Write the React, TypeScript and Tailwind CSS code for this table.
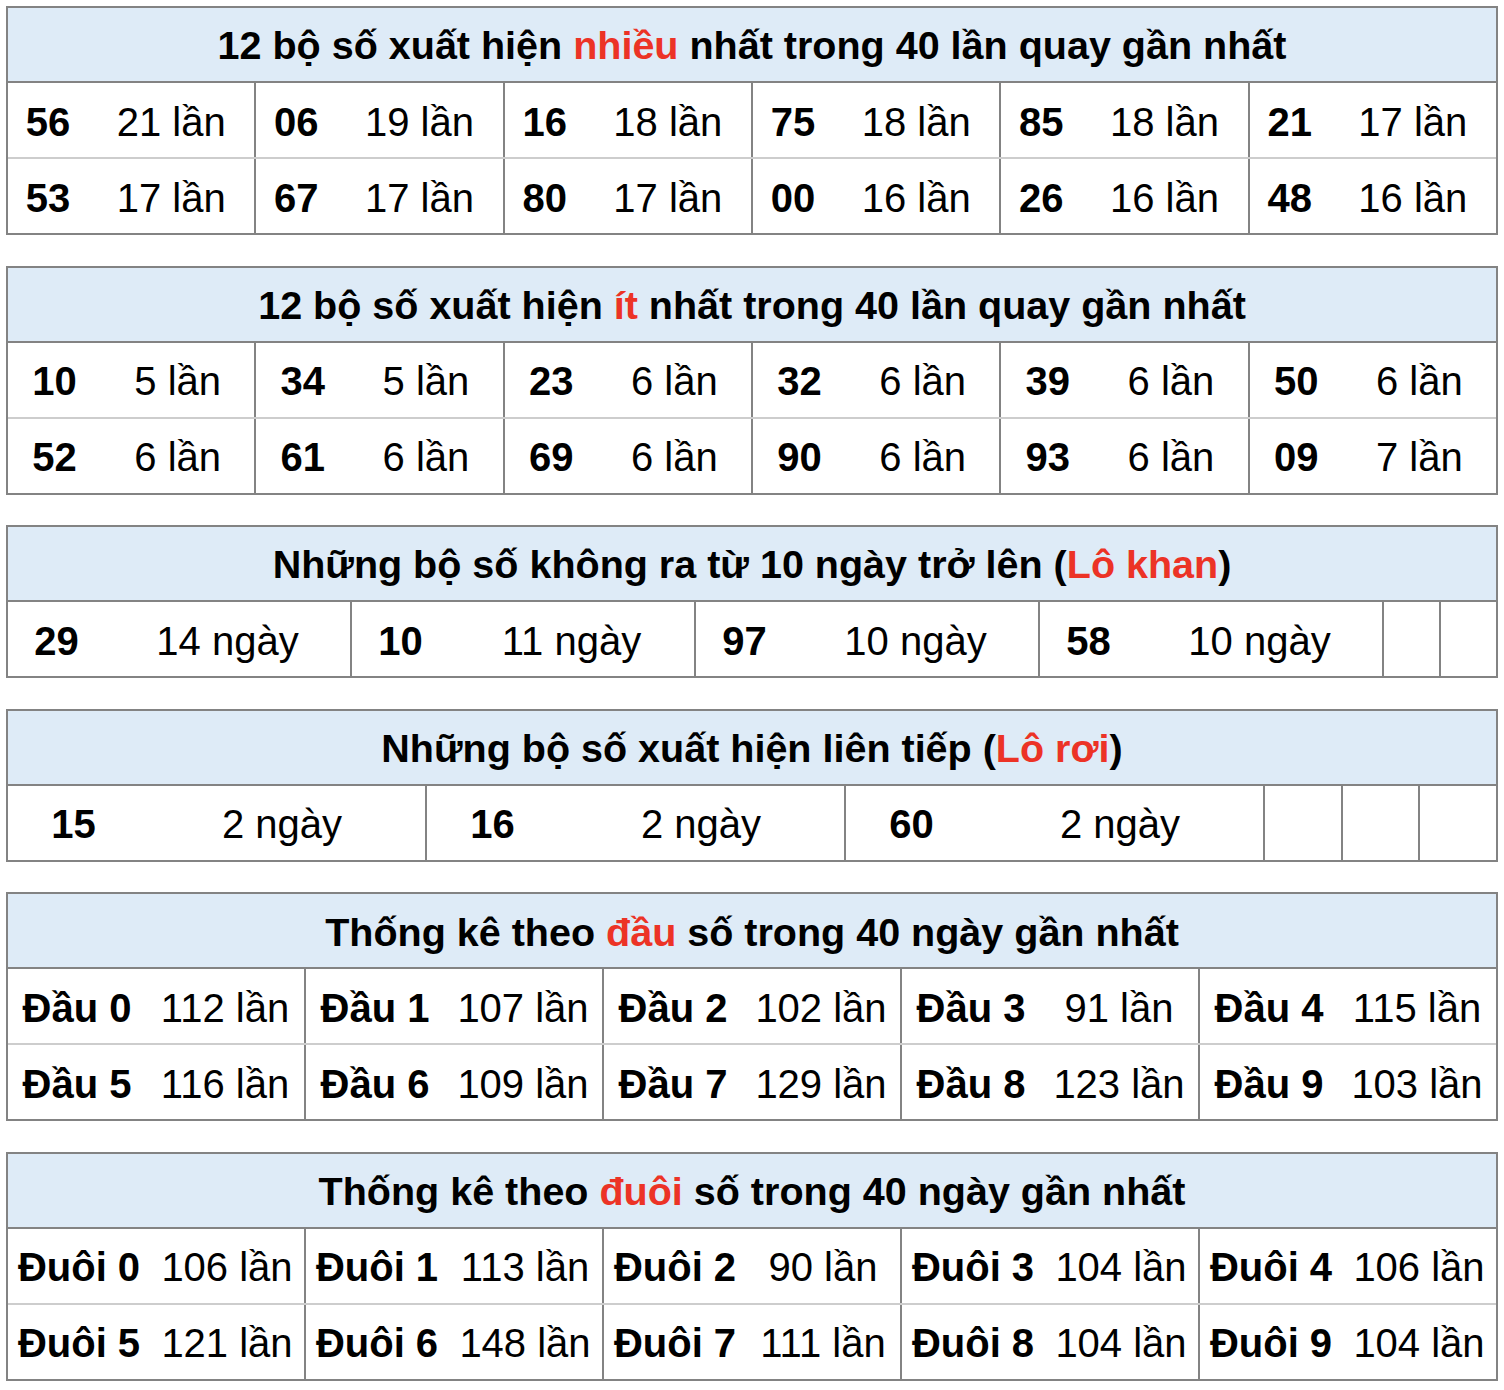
type Pair = [string, string];

const NHIEU: Pair[][] = [
  [['56', '21 lần'], ['06', '19 lần'], ['16', '18 lần'], ['75', '18 lần'], ['85', '18 lần'], ['21', '17 lần']],
  [['53', '17 lần'], ['67', '17 lần'], ['80', '17 lần'], ['00', '16 lần'], ['26', '16 lần'], ['48', '16 lần']],
];

const IT: Pair[][] = [
  [['10', '5 lần'], ['34', '5 lần'], ['23', '6 lần'], ['32', '6 lần'], ['39', '6 lần'], ['50', '6 lần']],
  [['52', '6 lần'], ['61', '6 lần'], ['69', '6 lần'], ['90', '6 lần'], ['93', '6 lần'], ['09', '7 lần']],
];

const KHAN: Pair[] = [['29', '14 ngày'], ['10', '11 ngày'], ['97', '10 ngày'], ['58', '10 ngày']];
const ROI: Pair[] = [['15', '2 ngày'], ['16', '2 ngày'], ['60', '2 ngày']];

const DAU: Pair[][] = [
  [['Đầu 0', '112 lần'], ['Đầu 1', '107 lần'], ['Đầu 2', '102 lần'], ['Đầu 3', '91 lần'], ['Đầu 4', '115 lần']],
  [['Đầu 5', '116 lần'], ['Đầu 6', '109 lần'], ['Đầu 7', '129 lần'], ['Đầu 8', '123 lần'], ['Đầu 9', '103 lần']],
];

const DUOI: Pair[][] = [
  [['Đuôi 0', '106 lần'], ['Đuôi 1', '113 lần'], ['Đuôi 2', '90 lần'], ['Đuôi 3', '104 lần'], ['Đuôi 4', '106 lần']],
  [['Đuôi 5', '121 lần'], ['Đuôi 6', '148 lần'], ['Đuôi 7', '111 lần'], ['Đuôi 8', '104 lần'], ['Đuôi 9', '104 lần']],
];

function Box({ title, children }: { title: React.ReactNode; children: React.ReactNode }) {
  return (
    <div className="border-2 border-[#838383]">
      <div className="flex h-[75px] items-center justify-center border-b-2 border-[#838383] bg-[#deebf7] pt-[3px] text-[39.5px] font-bold">
        {title}
      </div>
      {children}
    </div>
  );
}

function Cell({ pair, numW, className = 'flex-1' }: { pair: Pair; numW: string; className?: string }) {
  return (
    <div className={`flex border-r-2 border-[#838383] pt-[3px] last:border-r-0 ${className}`}>
      <div className={`flex shrink-0 items-center justify-center font-bold ${numW}`}>{pair[0]}</div>
      <div className="flex flex-1 items-center justify-center">{pair[1]}</div>
    </div>
  );
}

function Grid({ rows, numW }: { rows: Pair[][]; numW: string }) {
  return (
    <>
      {rows.map((row, i) => (
        <div key={i} className="flex h-[76px] border-b-2 border-[#cdcdcd] last:h-[74px] last:border-b-0">
          {row.map((p) => (
            <Cell key={p[0]} pair={p} numW={numW} />
          ))}
        </div>
      ))}
    </>
  );
}

const Red = ({ children }: { children: React.ReactNode }) => (
  <span className="text-[#ec3326]">{children}</span>
);

export default function App() {
  return (
    <div
      className="flex min-h-screen flex-col gap-[30.6px] bg-white px-[6px] pt-[6px] text-[40px] leading-none text-black"
      style={{ fontFamily: '"Liberation Sans", Arial, Helvetica, sans-serif' }}
    >
      <Box
        title={
          <>
            12 bộ số xuất hiện&nbsp;<Red>nhiều</Red>&nbsp;nhất trong 40 lần quay gần nhất
          </>
        }
      >
        <Grid rows={NHIEU} numW="w-[80px]" />
      </Box>

      <Box
        title={
          <>
            12 bộ số xuất hiện&nbsp;<Red>ít</Red>&nbsp;nhất trong 40 lần quay gần nhất
          </>
        }
      >
        <Grid rows={IT} numW="w-[93px]" />
      </Box>

      <Box
        title={
          <>
            Những bộ số không ra từ 10 ngày trở lên (<Red>Lô khan</Red>)
          </>
        }
      >
        <div className="flex h-[74px]">
          {KHAN.map((p) => (
            <Cell key={p[0]} pair={p} numW="w-[97px]" className="w-[344px]" />
          ))}
          <div className="flex-1 border-r-2 border-[#838383]" />
          <div className="flex-1" />
        </div>
      </Box>

      <Box
        title={
          <>
            Những bộ số xuất hiện liên tiếp (<Red>Lô rơi</Red>)
          </>
        }
      >
        <div className="flex h-[74px]">
          {ROI.map((p) => (
            <Cell key={p[0]} pair={p} numW="w-[131px]" className="w-[419px]" />
          ))}
          <div className="flex-1 border-r-2 border-[#838383]" />
          <div className="flex-1 border-r-2 border-[#838383]" />
          <div className="flex-1" />
        </div>
      </Box>

      <Box
        title={
          <>
            Thống kê theo&nbsp;<Red>đầu</Red>&nbsp;số trong 40 ngày gần nhất
          </>
        }
      >
        <Grid rows={DAU} numW="w-[138px]" />
      </Box>

      <Box
        title={
          <>
            Thống kê theo&nbsp;<Red>đuôi</Red>&nbsp;số trong 40 ngày gần nhất
          </>
        }
      >
        <Grid rows={DUOI} numW="w-[142px]" />
      </Box>
    </div>
  );
}
